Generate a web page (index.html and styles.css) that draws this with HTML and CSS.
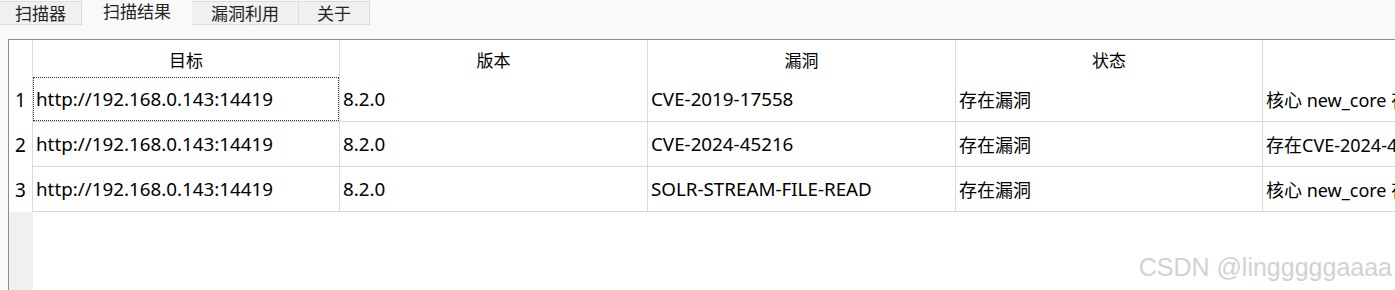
FILE: index.html
```html
<!DOCTYPE html>
<html lang="zh-CN">
<head>
  <meta charset="UTF-8">
  <title>扫描结果</title>
  <link rel="stylesheet" href="styles.css">
</head>
<body>
  <div class="tabs">
    <div class="tab t1">扫描器</div>
    <div class="tab t2 active">扫描结果</div>
    <div class="tab t3">漏洞利用</div>
    <div class="tab t4">关于</div>
  </div>

  <div class="grid">
    <div class="corner"></div>
    <div class="head">目标</div>
    <div class="head">版本</div>
    <div class="head">漏洞</div>
    <div class="head">状态</div>
    <div class="head"></div>

    <div class="num">1</div>
    <div class="cell focus">http://192.168.0.143:14419</div>
    <div class="cell">8.2.0</div>
    <div class="cell">CVE-2019-17558</div>
    <div class="cell zh">存在漏洞</div>
    <div class="cell mixed">核心 new_core 存在漏洞</div>

    <div class="num">2</div>
    <div class="cell">http://192.168.0.143:14419</div>
    <div class="cell">8.2.0</div>
    <div class="cell">CVE-2024-45216</div>
    <div class="cell zh">存在漏洞</div>
    <div class="cell mixed">存在CVE-2024-45216漏洞</div>

    <div class="num">3</div>
    <div class="cell">http://192.168.0.143:14419</div>
    <div class="cell">8.2.0</div>
    <div class="cell">SOLR-STREAM-FILE-READ</div>
    <div class="cell zh">存在漏洞</div>
    <div class="cell mixed">核心 new_core 存在漏洞</div>

    <div class="filler"></div>
  </div>

  <div class="watermark">CSDN @lingggggaaaa</div>
</body>
</html>
```

FILE: styles.css
```css
body {
  margin: 0;
  padding: 0;
  width: 1395px;
  height: 290px;
  overflow: hidden;
  position: relative;
  background-color: #f9f9f9;
  color: #000;
  font-family: "Noto Sans", "Noto Sans CJK SC", sans-serif;
}

/* Tabs */
.tabs {
  display: flex;
  height: 25px;
  align-items: flex-end;
}

.tab {
  box-sizing: border-box;
  height: 24px;
  border: 1px solid #dcdcdc;
  border-left: none;
  background-color: #f0f0f0;
  font-family: "Noto Sans CJK SC", sans-serif;
  font-size: 17px;
  line-height: 21px;
  text-align: center;
  color: #222;
}

.t1 { width: 82px; }
.t2 { width: 110px; }
.t3 { width: 107px; }
.t4 { width: 71px; }

.tab.active {
  height: 25px;
  border: none;
  background: transparent;
  line-height: 22px;
  padding-bottom: 3px;
}

/* Result table */
.grid {
  display: grid;
  grid-template-columns: 24px 307px 308px 308px 307px 340px;
  grid-template-rows: 37px 45px 45px 45px 1fr;
  height: 262px;
  margin: 14px 0 0 8px;
  border-top: 1px solid #898c95;
  border-left: 1px solid #898c95;
  background: #fff;
  font-size: 18.8px;
}

.corner,
.head,
.num {
  border-right: 1px solid #dadada;
}

.head {
  display: flex;
  align-items: center;
  justify-content: center;
  padding-top: 2px;
  font-family: "Noto Sans CJK SC", sans-serif;
  font-size: 17px;
}

.num {
  display: flex;
  align-items: center;
  justify-content: center;
  font-size: 19px;
}

.cell {
  display: flex;
  align-items: center;
  padding-left: 3px;
  border-right: 1px solid #dadada;
  border-bottom: 1px solid #dadada;
  white-space: nowrap;
  overflow: hidden;
}

.cell.zh {
  font-size: 18px;
}

.cell.mixed {
  font-size: 18px;
}

.cell.focus {
  position: relative;
}

.cell.focus::after {
  content: "";
  position: absolute;
  top: 0;
  left: 0;
  right: 0;
  bottom: 0;
  border: 1px dotted #333;
}

.filler {
  background: #f0f0f0;
  border-right: 1px solid #f0f0f0;
}

/* Watermark */
.watermark {
  position: absolute;
  right: 3px;
  bottom: 8px;
  font-family: "Liberation Sans", Arial, sans-serif;
  font-size: 25px;
  color: #d2d2d2;
  text-shadow: 1px 1px 0 #fff;
}
```
